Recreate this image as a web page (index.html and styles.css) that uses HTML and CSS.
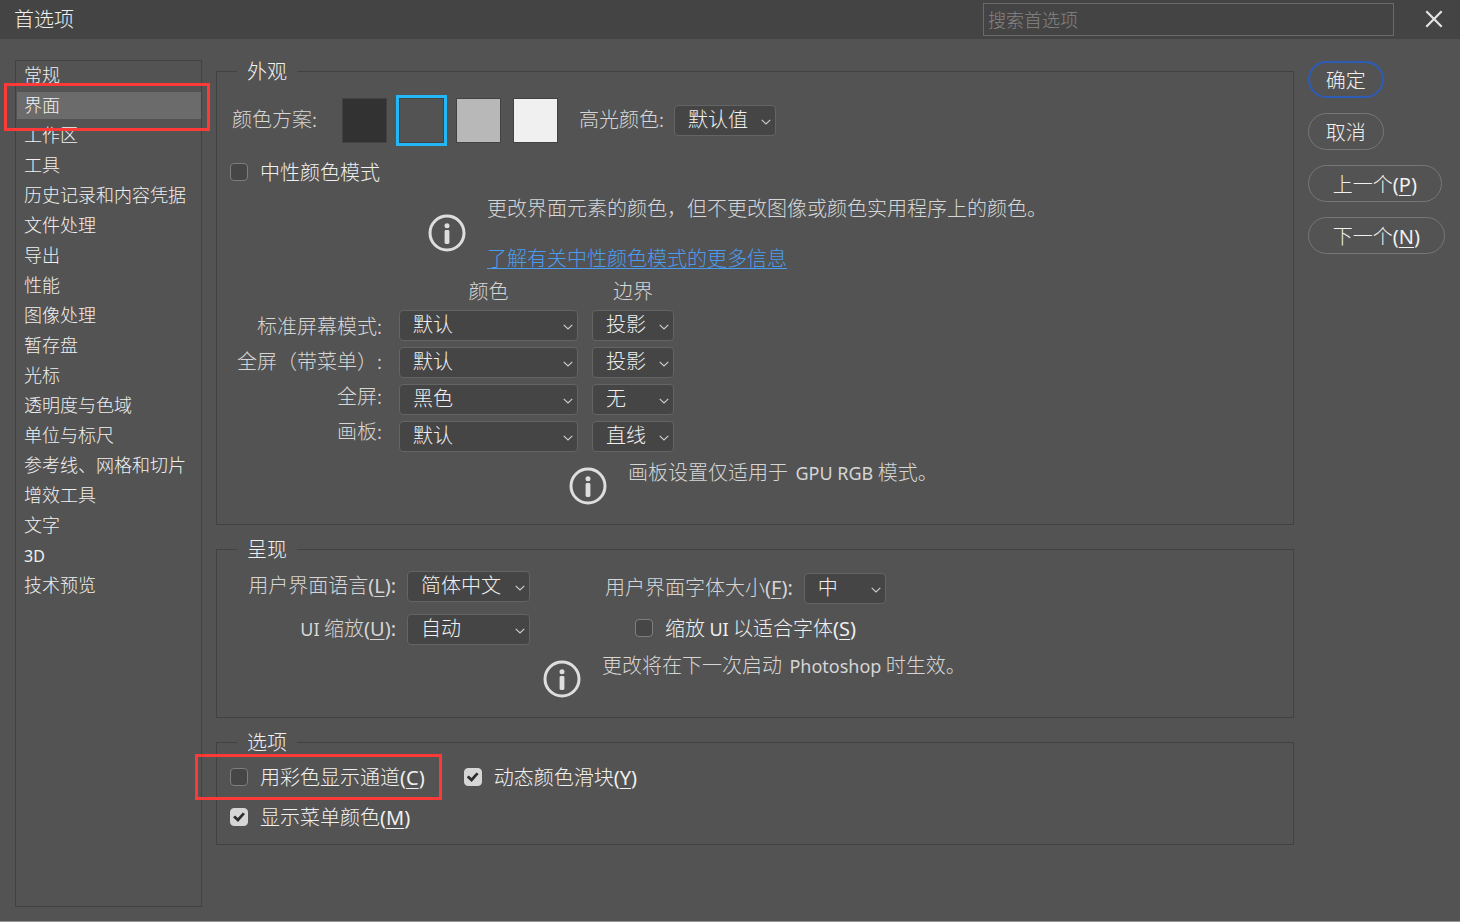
FILE: index.html
```html
<!DOCTYPE html>
<html lang="zh-CN">
<head>
<meta charset="utf-8">
<title>首选项</title>
<meta name="viewport" content="width=device-width, initial-scale=1">
<link rel="stylesheet" href="styles.css">
</head>
<body>
<svg class="symbols" width="0" height="0" aria-hidden="true">
  <symbol id="chevron" viewBox="0 0 10 6"><path d="M0.7 0.8 L5 5 L9.3 0.8" fill="none" stroke="currentColor" stroke-width="1.1"/></symbol>
  <symbol id="info" viewBox="0 0 38 38">
    <circle cx="19" cy="19" r="17" fill="none" stroke="currentColor" stroke-width="3"/>
    <circle cx="19" cy="11.7" r="2.5" fill="currentColor"/>
    <rect x="16.6" y="16" width="4.8" height="14" rx="1.4" fill="currentColor"/>
  </symbol>
</svg>

<header class="titlebar">
  <h1 class="title">首选项</h1>
  <input class="search" type="search" placeholder="搜索首选项" aria-label="搜索首选项">
  <button class="close" type="button" aria-label="关闭">
    <svg width="18" height="18" viewBox="0 0 18 18"><path d="M1.3 1.3 L16.7 16.7 M16.7 1.3 L1.3 16.7" fill="none" stroke="currentColor" stroke-width="2.2"/></svg>
  </button>
</header>

<div class="dialog">
  <nav class="sidebar" aria-label="类别">
    <a class="item" href="#">常规</a>
    <a class="item current" href="#" aria-current="page">界面<span class="mark mark-item"></span></a>
    <a class="item" href="#">工作区</a>
    <a class="item" href="#">工具</a>
    <a class="item" href="#">历史记录和内容凭据</a>
    <a class="item" href="#">文件处理</a>
    <a class="item" href="#">导出</a>
    <a class="item" href="#">性能</a>
    <a class="item" href="#">图像处理</a>
    <a class="item" href="#">暂存盘</a>
    <a class="item" href="#">光标</a>
    <a class="item" href="#">透明度与色域</a>
    <a class="item" href="#">单位与标尺</a>
    <a class="item" href="#">参考线、网格和切片</a>
    <a class="item" href="#">增效工具</a>
    <a class="item" href="#">文字</a>
    <a class="item" href="#"><span class="latin abbr">3D</span></a>
    <a class="item" href="#">技术预览</a>
  </nav>

  <main class="panels">
    <fieldset class="group appearance">
      <legend>外观</legend>
      <div class="scheme-row">
        <span class="label" id="scheme">颜色方案:</span>
        <div class="swatches" role="radiogroup" aria-labelledby="scheme">
          <input class="swatch darkest" type="radio" name="scheme" aria-label="深黑">
          <input class="swatch dark" type="radio" name="scheme" aria-label="深灰" checked>
          <input class="swatch light" type="radio" name="scheme" aria-label="浅灰">
          <input class="swatch lightest" type="radio" name="scheme" aria-label="白色">
        </div>
        <label class="label" for="highlight">高光颜色:</label>
        <span class="dropdown w-highlight"><select id="highlight"><option>默认值</option></select><svg class="chevron"><use href="#chevron"/></svg></span>
      </div>
      <label class="check neutral"><input type="checkbox"><span>中性颜色模式</span></label>
      <div class="note neutral-note">
        <svg class="info"><use href="#info"/></svg>
        <div class="note-text">
          <p>更改界面元素的颜色，但不更改图像或颜色实用程序上的颜色。</p>
          <p><a class="link" href="#">了解有关中性颜色模式的更多信息</a></p>
        </div>
      </div>
      <div class="modes">
        <div class="mode-labels">
          <label for="c1">标准屏幕模式:</label>
          <label for="c2">全屏（带菜单）:</label>
          <label for="c3">全屏:</label>
          <label for="c4">画板:</label>
        </div>
        <div class="mode-column w-color">
          <span class="column-head">颜色</span>
          <span class="dropdown"><select id="c1"><option>默认</option></select><svg class="chevron"><use href="#chevron"/></svg></span>
          <span class="dropdown"><select id="c2"><option>默认</option></select><svg class="chevron"><use href="#chevron"/></svg></span>
          <span class="dropdown"><select id="c3"><option>黑色</option></select><svg class="chevron"><use href="#chevron"/></svg></span>
          <span class="dropdown"><select id="c4"><option>默认</option></select><svg class="chevron"><use href="#chevron"/></svg></span>
        </div>
        <div class="mode-column w-small">
          <span class="column-head">边界</span>
          <span class="dropdown"><select aria-label="标准屏幕模式边界"><option>投影</option></select><svg class="chevron"><use href="#chevron"/></svg></span>
          <span class="dropdown"><select aria-label="全屏（带菜单）边界"><option>投影</option></select><svg class="chevron"><use href="#chevron"/></svg></span>
          <span class="dropdown"><select aria-label="全屏边界"><option>无</option></select><svg class="chevron"><use href="#chevron"/></svg></span>
          <span class="dropdown"><select aria-label="画板边界"><option>直线</option></select><svg class="chevron"><use href="#chevron"/></svg></span>
        </div>
      </div>
      <div class="note artboard-note">
        <svg class="info"><use href="#info"/></svg>
        <p class="note-text">画板设置仅适用于 <span class="latin word">GPU RGB</span> 模式。</p>
      </div>
    </fieldset>

    <fieldset class="group presentation">
      <legend>呈现</legend>
      <div class="present-grid">
        <label class="label end" for="lang">用户界面语言<span class="latin key">(<u>L</u>):</span></label>
        <span class="dropdown w-lang"><select id="lang"><option>简体中文</option></select><svg class="chevron"><use href="#chevron"/></svg></span>
        <div class="size-row">
          <label class="label" for="size">用户界面字体大小<span class="latin key">(<u>F</u>):</span></label>
          <span class="dropdown w-small"><select id="size"><option>中</option></select><svg class="chevron"><use href="#chevron"/></svg></span>
        </div>
        <label class="label end" for="zoom"><span class="latin">UI</span> 缩放<span class="latin key">(<u>U</u>):</span></label>
        <span class="dropdown w-lang"><select id="zoom"><option>自动</option></select><svg class="chevron"><use href="#chevron"/></svg></span>
        <label class="check scale"><input type="checkbox"><span>缩放 <span class="latin">UI</span> 以适合字体<span class="latin key">(<u>S</u>)</span></span></label>
      </div>
      <div class="note restart-note">
        <svg class="info"><use href="#info"/></svg>
        <p class="note-text">更改将在下一次启动 <span class="latin word">Photoshop</span> 时生效。</p>
      </div>
    </fieldset>

    <fieldset class="group options">
      <legend>选项</legend>
      <div class="option-row">
        <label class="check"><input type="checkbox"><span>用彩色显示通道<span class="latin key">(<u>C</u>)</span></span><span class="mark mark-option"></span></label>
        <label class="check"><input type="checkbox" checked><span>动态颜色滑块<span class="latin key">(<u>Y</u>)</span></span></label>
      </div>
      <div class="option-row">
        <label class="check"><input type="checkbox" checked><span>显示菜单颜色<span class="latin key">(<u>M</u>)</span></span></label>
      </div>
    </fieldset>
  </main>

  <div class="actions">
    <button class="button primary" type="button">确定</button>
    <button class="button" type="button">取消</button>
    <button class="button wide" type="button">上一个<span class="latin key">(<u>P</u>)</span></button>
    <button class="button wide" type="button">下一个<span class="latin key">(<u>N</u>)</span></button>
  </div>
</div>
</body>
</html>
```

FILE: styles.css
```css
* { box-sizing: border-box; }

body {
  margin: 0;
  min-height: 100vh;
  display: flex;
  flex-direction: column;
  background: #535353;
  border-bottom: 1px solid #969396;
  color: #f0f0f0;
  font: 300 20px/24px "Noto Sans CJK SC", "Noto Sans", sans-serif;
}

p, h1 { margin: 0; }
input, select, button { font: inherit; color: inherit; }
.symbols { position: absolute; }

.latin {
  font-family: "Noto Sans", "Noto Sans CJK SC", sans-serif;
  font-size: 18px;
  font-weight: 400;
  line-height: 20px;
}
.latin.key { font-size: 20px; }
.latin.word { margin-left: 3px; }
.latin.abbr { font-size: 16px; }

u { text-underline-offset: 3px; text-decoration-thickness: 1px; }

/* Title bar */
.titlebar {
  display: flex;
  align-items: center;
  height: 39px;
  padding: 0 17px 2px 14px;
  background: #444444;
}
.title { flex: 1; font-size: 20px; font-weight: 300; }
.search {
  width: 411px;
  height: 33px;
  margin-top: 2px;
  padding: 0 4px 2px;
  background: transparent;
  border: 1px solid #6a6a6a;
  border-radius: 0;
  font-size: 18px;
  appearance: none;
}
.search::placeholder { color: #858585; opacity: 1; }
.close {
  display: flex;
  margin-left: 31px;
  padding: 0;
  background: none;
  border: 0;
  color: #e4e4e4;
}

/* Dialog body */
.dialog {
  flex: 1;
  display: flex;
  align-items: stretch;
  padding: 20px 15px 14px 15px;
}

.sidebar {
  flex: none;
  width: 187px;
  display: flex;
  flex-direction: column;
  gap: 3px;
  margin-top: 1px;
  padding: 1px 0 1px 1px;
  border: 1px solid #424242;
}
.item {
  position: relative;
  padding: 0 0 2px 7px;
  color: inherit;
  font-size: 18px;
  line-height: 25px;
  text-decoration: none;
}
.item.current { background: #6b6b6b; }

/* Red call-outs laid over the controls */
.mark {
  position: absolute;
  z-index: 1;
  border: 3px solid #fd3a38;
  pointer-events: none;
}
.mark-item { inset: -9px -9px -12px -13px; }
.mark-option { inset: -11px -17px; }

.mark-option { left: -35px; }

.panels {
  flex: 1;
  display: flex;
  flex-direction: column;
  gap: 12px;
  margin-left: 14px;
}
.group {
  min-width: 0;
  margin: 0;
  padding: 0 13px;
  border: 1px solid #424242;
}
.group legend { margin-left: 7px; padding: 0 10px; }
.label, .mode-labels, .column-head, .note-text { color: #d6d6d6; }

.scheme-row { display: flex; align-items: center; padding: 15px 0 0 2px; }
.scheme-row .label { padding-bottom: 3px; }
.swatches { display: flex; gap: 12px; margin: 0 21px 0 25px; }
.swatch {
  width: 45px;
  height: 45px;
  margin: 0;
  appearance: none;
  border: 1px solid #424242;
}
.swatch:checked { outline: 3px solid #22b8f8; }
.darkest { background: #323232; }
.dark { background: #535353; }
.light { background: #b8b8b8; }
.lightest { background: #f0f0f0; }

/* Drop-downs */
.dropdown { display: grid; align-items: center; }
.dropdown > * { grid-area: 1 / 1; }
.dropdown select {
  width: 100%;
  height: 31px;
  padding: 0 19px 4px 13px;
  appearance: none;
  background: #454545;
  border: 1px solid #646464;
  border-radius: 4px;
}
.chevron {
  width: 10px;
  height: 6px;
  margin: 3px 5px 0 0;
  justify-self: end;
  color: #d0d0d0;
  pointer-events: none;
}
.w-highlight { width: 102px; margin-left: 10px; }
.w-color { width: 179px; }
.w-small { width: 82px; }
.w-lang { width: 123px; }

/* Tick boxes */
.check {
  position: relative;
  display: inline-flex;
  align-items: center;
  gap: 12px;
}
.check input {
  flex: none;
  display: grid;
  place-items: center;
  width: 18px;
  height: 18px;
  margin: 0;
  appearance: none;
  background: #464646;
  border: 1px solid #7e7e7e;
  border-radius: 4px;
}
.check input:checked { background: #d6d6d6; border-color: #d6d6d6; }
.check input:checked::before {
  content: "";
  width: 12px;
  height: 10px;
  background: #2e2e2e;
  clip-path: polygon(0 52%, 18% 35%, 40% 60%, 82% 4%, 100% 20%, 42% 100%);
}
.neutral { display: flex; margin-top: 17px; }

/* Notes */
.note { display: flex; }
.info { flex: none; width: 38px; height: 38px; color: #dedede; }
.note-text { margin-left: 21px; }
.neutral-note { align-items: center; margin: 12px 0 0 198px; }
.neutral-note .note-text { display: grid; gap: 26px; }
.link { color: #4a9cf0; text-decoration-thickness: 1px; text-underline-offset: 2px; }

.modes { display: flex; margin-top: 9px; }
.mode-labels {
  width: 152px;
  display: flex;
  flex-direction: column;
  padding-top: 29px;
  line-height: 35px;
  text-align: right;
}
.mode-column { display: flex; flex-direction: column; gap: 6px; margin-left: 17px; }
.mode-column + .mode-column { margin-left: 14px; }
.column-head { height: 25px; text-align: center; }
.artboard-note { align-items: flex-start; margin: 8px 0 19px 339px; }
.artboard-note .info, .restart-note .info { margin-top: 7px; }

.present-grid {
  display: grid;
  grid-template-columns: 166px 123px auto;
  justify-content: start;
  column-gap: 11px;
  row-gap: 10px;
  align-items: start;
  padding-top: 10px;
}
.present-grid .label { line-height: 28px; }
.end { text-align: right; }
.size-row { display: flex; align-items: flex-start; gap: 11px; margin-left: 64px; padding-top: 2px; }
.scale { margin: 2px 0 0 94px; }
.restart-note { align-items: flex-start; margin: 8px 0 19px 313px; }

.options { padding-bottom: 15px; }
.option-row { display: flex; gap: 39px; margin-top: 11px; }
.option-row + .option-row { margin-top: 16px; }

/* Buttons */
.actions {
  flex: none;
  display: flex;
  flex-direction: column;
  align-items: flex-start;
  gap: 15px;
  margin: 2px 0 0 14px;
}
.button {
  height: 37px;
  padding: 1px 17px 0;
  background: transparent;
  border: 1px solid #777777;
  border-radius: 19px;
}
.button.wide { padding: 1px 24px 0; }
.button.primary { border: 2px solid #2c5cb8; padding: 1px 16px 0; }
```
